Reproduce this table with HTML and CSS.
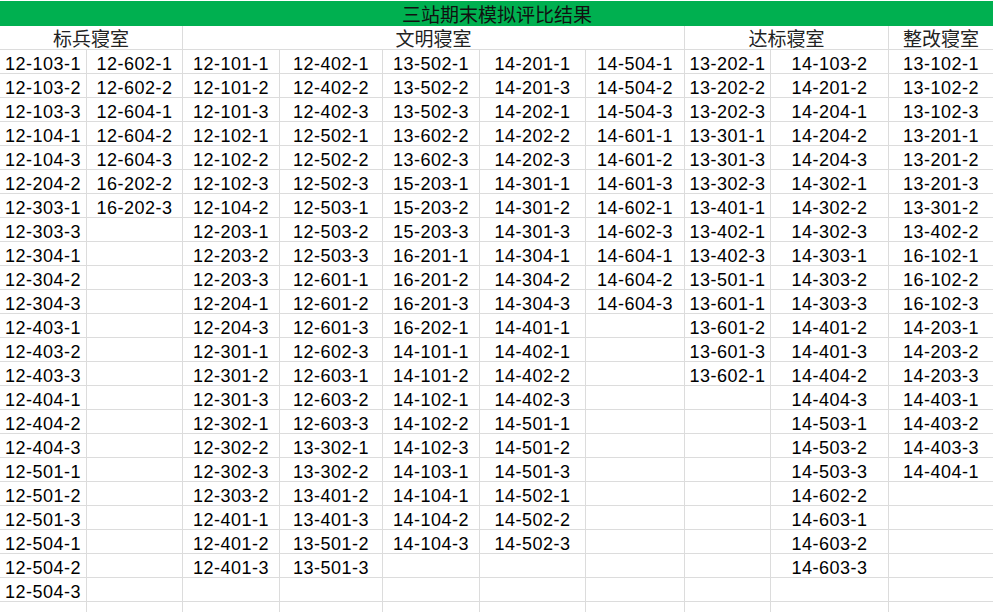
FILE: index.html
```html
<!DOCTYPE html>
<html lang="zh-CN">
<head>
<meta charset="utf-8">
<title>三站期末模拟评比结果</title>
<link rel="stylesheet" href="styles.css">
</head>
<body>
<div class="sheet">
  <div class="title">三站期末模拟评比结果</div>

  <div class="head span2">标兵寝室</div>
  <div class="head span5">文明寝室</div>
  <div class="head span2">达标寝室</div>
  <div class="head last">整改寝室</div>

  <div class="c">12-103-1</div><div class="c">12-602-1</div><div class="c">12-101-1</div><div class="c">12-402-1</div><div class="c">13-502-1</div><div class="c">14-201-1</div><div class="c">14-504-1</div><div class="c">13-202-1</div><div class="c">14-103-2</div><div class="c last">13-102-1</div>
  <div class="c">12-103-2</div><div class="c">12-602-2</div><div class="c">12-101-2</div><div class="c">12-402-2</div><div class="c">13-502-2</div><div class="c">14-201-3</div><div class="c">14-504-2</div><div class="c">13-202-2</div><div class="c">14-201-2</div><div class="c last">13-102-2</div>
  <div class="c">12-103-3</div><div class="c">12-604-1</div><div class="c">12-101-3</div><div class="c">12-402-3</div><div class="c">13-502-3</div><div class="c">14-202-1</div><div class="c">14-504-3</div><div class="c">13-202-3</div><div class="c">14-204-1</div><div class="c last">13-102-3</div>
  <div class="c">12-104-1</div><div class="c">12-604-2</div><div class="c">12-102-1</div><div class="c">12-502-1</div><div class="c">13-602-2</div><div class="c">14-202-2</div><div class="c">14-601-1</div><div class="c">13-301-1</div><div class="c">14-204-2</div><div class="c last">13-201-1</div>
  <div class="c">12-104-3</div><div class="c">12-604-3</div><div class="c">12-102-2</div><div class="c">12-502-2</div><div class="c">13-602-3</div><div class="c">14-202-3</div><div class="c">14-601-2</div><div class="c">13-301-3</div><div class="c">14-204-3</div><div class="c last">13-201-2</div>
  <div class="c">12-204-2</div><div class="c">16-202-2</div><div class="c">12-102-3</div><div class="c">12-502-3</div><div class="c">15-203-1</div><div class="c">14-301-1</div><div class="c">14-601-3</div><div class="c">13-302-3</div><div class="c">14-302-1</div><div class="c last">13-201-3</div>
  <div class="c">12-303-1</div><div class="c">16-202-3</div><div class="c">12-104-2</div><div class="c">12-503-1</div><div class="c">15-203-2</div><div class="c">14-301-2</div><div class="c">14-602-1</div><div class="c">13-401-1</div><div class="c">14-302-2</div><div class="c last">13-301-2</div>
  <div class="c">12-303-3</div><div class="c"></div><div class="c">12-203-1</div><div class="c">12-503-2</div><div class="c">15-203-3</div><div class="c">14-301-3</div><div class="c">14-602-3</div><div class="c">13-402-1</div><div class="c">14-302-3</div><div class="c last">13-402-2</div>
  <div class="c">12-304-1</div><div class="c"></div><div class="c">12-203-2</div><div class="c">12-503-3</div><div class="c">16-201-1</div><div class="c">14-304-1</div><div class="c">14-604-1</div><div class="c">13-402-3</div><div class="c">14-303-1</div><div class="c last">16-102-1</div>
  <div class="c">12-304-2</div><div class="c"></div><div class="c">12-203-3</div><div class="c">12-601-1</div><div class="c">16-201-2</div><div class="c">14-304-2</div><div class="c">14-604-2</div><div class="c">13-501-1</div><div class="c">14-303-2</div><div class="c last">16-102-2</div>
  <div class="c">12-304-3</div><div class="c"></div><div class="c">12-204-1</div><div class="c">12-601-2</div><div class="c">16-201-3</div><div class="c">14-304-3</div><div class="c">14-604-3</div><div class="c">13-601-1</div><div class="c">14-303-3</div><div class="c last">16-102-3</div>
  <div class="c">12-403-1</div><div class="c"></div><div class="c">12-204-3</div><div class="c">12-601-3</div><div class="c">16-202-1</div><div class="c">14-401-1</div><div class="c"></div><div class="c">13-601-2</div><div class="c">14-401-2</div><div class="c last">14-203-1</div>
  <div class="c">12-403-2</div><div class="c"></div><div class="c">12-301-1</div><div class="c">12-602-3</div><div class="c">14-101-1</div><div class="c">14-402-1</div><div class="c"></div><div class="c">13-601-3</div><div class="c">14-401-3</div><div class="c last">14-203-2</div>
  <div class="c">12-403-3</div><div class="c"></div><div class="c">12-301-2</div><div class="c">12-603-1</div><div class="c">14-101-2</div><div class="c">14-402-2</div><div class="c"></div><div class="c">13-602-1</div><div class="c">14-404-2</div><div class="c last">14-203-3</div>
  <div class="c">12-404-1</div><div class="c"></div><div class="c">12-301-3</div><div class="c">12-603-2</div><div class="c">14-102-1</div><div class="c">14-402-3</div><div class="c"></div><div class="c"></div><div class="c">14-404-3</div><div class="c last">14-403-1</div>
  <div class="c">12-404-2</div><div class="c"></div><div class="c">12-302-1</div><div class="c">12-603-3</div><div class="c">14-102-2</div><div class="c">14-501-1</div><div class="c"></div><div class="c"></div><div class="c">14-503-1</div><div class="c last">14-403-2</div>
  <div class="c">12-404-3</div><div class="c"></div><div class="c">12-302-2</div><div class="c">13-302-1</div><div class="c">14-102-3</div><div class="c">14-501-2</div><div class="c"></div><div class="c"></div><div class="c">14-503-2</div><div class="c last">14-403-3</div>
  <div class="c">12-501-1</div><div class="c"></div><div class="c">12-302-3</div><div class="c">13-302-2</div><div class="c">14-103-1</div><div class="c">14-501-3</div><div class="c"></div><div class="c"></div><div class="c">14-503-3</div><div class="c last">14-404-1</div>
  <div class="c">12-501-2</div><div class="c"></div><div class="c">12-303-2</div><div class="c">13-401-2</div><div class="c">14-104-1</div><div class="c">14-502-1</div><div class="c"></div><div class="c"></div><div class="c">14-602-2</div><div class="c last"></div>
  <div class="c">12-501-3</div><div class="c"></div><div class="c">12-401-1</div><div class="c">13-401-3</div><div class="c">14-104-2</div><div class="c">14-502-2</div><div class="c"></div><div class="c"></div><div class="c">14-603-1</div><div class="c last"></div>
  <div class="c">12-504-1</div><div class="c"></div><div class="c">12-401-2</div><div class="c">13-501-2</div><div class="c">14-104-3</div><div class="c">14-502-3</div><div class="c"></div><div class="c"></div><div class="c">14-603-2</div><div class="c last"></div>
  <div class="c">12-504-2</div><div class="c"></div><div class="c">12-401-3</div><div class="c">13-501-3</div><div class="c"></div><div class="c"></div><div class="c"></div><div class="c"></div><div class="c">14-603-3</div><div class="c last"></div>
  <div class="c">12-504-3</div><div class="c"></div><div class="c"></div><div class="c"></div><div class="c"></div><div class="c"></div><div class="c"></div><div class="c"></div><div class="c"></div><div class="c last"></div>
  <div class="c"></div><div class="c"></div><div class="c"></div><div class="c"></div><div class="c"></div><div class="c"></div><div class="c"></div><div class="c"></div><div class="c"></div><div class="c last"></div>
</div>
</body>
</html>
```

FILE: styles.css
```css
html, body {
  margin: 0;
  padding: 0;
  background: #ffffff;
  overflow: hidden;
}

.sheet {
  display: grid;
  grid-template-columns: 87px 96px 97px 103px 97px 106px 99px 86px 118px 105px;
  grid-template-rows: 25px;
  grid-auto-rows: 24px;
  width: 994px;
  margin-top: 1px;
}

.title {
  grid-column: 1 / -1;
  background: #00b050;
  color: #111111;
  font-family: "Noto Sans CJK SC", sans-serif;
  font-size: 19px;
  line-height: 25px;
  text-align: center;
  white-space: nowrap;
}

.head {
  box-sizing: border-box;
  border-right: 1px solid #dcdcdc;
  border-bottom: 1px solid #dcdcdc;
  color: #222222;
  font-family: "Noto Sans CJK SC", sans-serif;
  font-size: 19px;
  line-height: 23px;
  text-align: center;
  white-space: nowrap;
}

.span2 { grid-column: span 2; }
.span5 { grid-column: span 5; }

.c {
  box-sizing: border-box;
  border-right: 1px solid #dcdcdc;
  border-bottom: 1px solid #dcdcdc;
  padding-top: 4px;
  color: #000000;
  font-family: "Liberation Sans", Arial, sans-serif;
  font-size: 18px;
  line-height: 20px;
  letter-spacing: 0.5px;
  text-align: center;
  white-space: nowrap;
  overflow: hidden;
}

.last {
  border-right-color: transparent;
}
```
